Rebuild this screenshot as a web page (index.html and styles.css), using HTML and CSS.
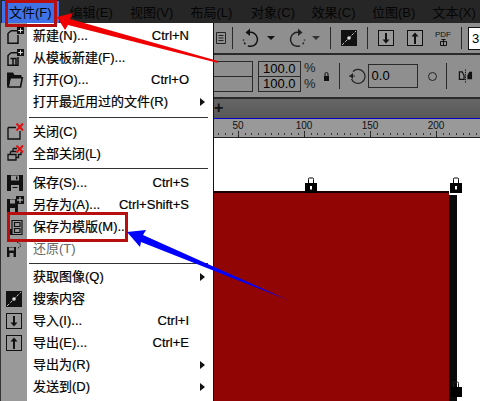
FILE: index.html
```html
<!DOCTYPE html>
<html lang="zh-CN">
<head>
  <meta charset="UTF-8">
  <title>文件菜单</title>
  <link rel="stylesheet" href="styles.css">
</head>
<body>

  <div class="menubar">
    <span class="menubar-item active">文件(F)</span>
    <span class="menubar-item">编辑(E)</span>
    <span class="menubar-item">视图(V)</span>
    <span class="menubar-item">布局(L)</span>
    <span class="menubar-item">对象(C)</span>
    <span class="menubar-item">效果(C)</span>
    <span class="menubar-item">位图(B)</span>
    <span class="menubar-item">文本(X)</span>
  </div>

  <div class="main">
    <div class="sidebar">
      <div class="tool">
        <svg width="18" height="18" viewBox="0 0 18 18" fill="none" stroke="#111" stroke-width="1.5"><path d="M5 3.7h6M5 3.7L2 6.5V16.3h10V8"/><rect x="11" y="0" width="7" height="7" fill="#111" stroke="none"/><path d="M14.5 1.2v4.6M12.2 3.5h4.6" stroke="#ddd" stroke-width="1"/></svg>
      </div>
      <div class="tool">
        <svg width="18" height="18" viewBox="0 0 18 18" fill="none" stroke="#111" stroke-width="1.5"><path d="M5 3.7h6M5 3.7L2 6.5V16.3h10V8M4.5 9.5h5.5v6.8M7 9.5v6.8"/><rect x="11" y="0" width="7" height="7" fill="#111" stroke="none"/><path d="M14.5 1.2v4.6M12.2 3.5h4.6" stroke="#ddd" stroke-width="1"/></svg>
      </div>
      <div class="tool">
        <svg width="18" height="18" viewBox="0 0 18 18"><path d="M1 1.5h6l1.5 2.5h7v2H5L3 15H1z" fill="#111"/><path d="M4 6.7h12.3L14.5 16H2z" fill="none" stroke="#111" stroke-width="1.6"/></svg>
      </div>
      <div class="tool"></div>
      <div class="tool-gap"></div>
      <div class="tool">
        <svg width="18" height="18" viewBox="0 0 18 18" fill="none" stroke="#111" stroke-width="1.4"><path d="M2 4.5h8M2 4.5V16h12V8"/><path d="M10.5 0.5l6.5 7M17 0.5l-6.5 7" stroke="#e01010" stroke-width="2"/></svg>
      </div>
      <div class="tool">
        <svg width="18" height="18" viewBox="0 0 18 18" fill="none" stroke="#111" stroke-width="1.3"><path d="M7 3.5h4M7 3.5v3M4.5 6.5h6M4.5 6.5v3M2 9.5h8V15H2zM10 12.5h2.5V9.5h2.5V7"/><path d="M10.5 0.5l6.5 7M17 0.5l-6.5 7" stroke="#e01010" stroke-width="2"/></svg>
      </div>
      <div class="tool-gap short"></div>
      <div class="tool">
        <svg width="18" height="18" viewBox="0 0 18 18"><path d="M1 1h16v16H1z" fill="#111"/><rect x="5" y="1.5" width="8" height="5" fill="#999"/><rect x="10" y="2.5" width="1.5" height="3" fill="#111"/><rect x="5" y="11" width="8" height="6" fill="#999"/><rect x="6.5" y="13" width="5" height="1" fill="#111"/></svg>
      </div>
      <div class="tool">
        <svg width="18" height="18" viewBox="0 0 18 18"><path d="M1 3h11v14H1z" fill="#111"/><rect x="4" y="3.5" width="5" height="4" fill="#999"/><rect x="4" y="12" width="5" height="5" fill="#999"/><rect x="10" y="0" width="8" height="8" fill="#111"/><path d="M14 1v6M11 4h6" stroke="#ddd"/></svg>
      </div>
      <div class="tool">
        <svg width="18" height="18" viewBox="0 0 18 18" fill="none" stroke="#111" stroke-width="1.2"><path d="M6 2.5h10v14H6z"/><path d="M8.5 4.5h5.5v4H8.5zM8.5 10.5h5.5v4H8.5z"/><rect x="1" y="11" width="5" height="6" fill="#111" stroke="none"/></svg>
      </div>
      <div class="tool">
        <svg width="18" height="18" viewBox="0 0 18 18"><path d="M1 7h9v10H1z" fill="#111"/><rect x="3" y="7.5" width="5" height="3" fill="#999"/><rect x="3.5" y="13" width="4" height="4" fill="#999"/><path d="M11 2.5a3 3 0 0 1 3 4.5l-2 1" fill="none" stroke="#111" stroke-dasharray="1.5 1"/></svg>
      </div>
      <div class="tool-gap tiny"></div>
      <div class="tool"></div>
      <div class="tool">
        <svg width="16" height="16" viewBox="0 0 16 16"><rect width="16" height="16" fill="#111"/><path d="M1 15L15 1" stroke="#bbb" stroke-dasharray="3 1.5"/><circle cx="8" cy="8" r="1.8" fill="#ddd"/></svg>
      </div>
      <div class="tool">
        <svg class="box-icon" width="16" height="16" viewBox="0 0 16 16"><path d="M8 3v8" stroke="#111" stroke-width="2"/><path d="M4.5 9.5h7L8 13.5z" fill="#111"/></svg>
      </div>
      <div class="tool">
        <svg class="box-icon" width="16" height="16" viewBox="0 0 16 16"><path d="M8 6v8" stroke="#111" stroke-width="2"/><path d="M4.5 6.5h7L8 2.5z" fill="#111"/></svg>
      </div>
    </div>

    <div class="content">
      <div class="toolbar">
        <svg class="list-icon" width="12" height="12" viewBox="0 0 12 12" fill="none" stroke="#222"><path d="M1.5 .5h9v11h-9zM3.500 3.500h5M3.500 6h5M3.500 8.500h5"/></svg>
        <i class="vsep"></i>
        <svg class="undo" width="18" height="20" viewBox="0 0 18 20" fill="none" stroke="#111" stroke-width="1.5"><path d="M7 4.500a7 7 0 1 1-5.500 7" stroke-dasharray="26 3 2 2"/><path d="M8 0.500L3.500 4.500 8 8z" fill="#111" stroke="none"/></svg>
        <i class="caret dark"></i>
        <svg class="redo" width="18" height="20" viewBox="0 0 18 20" fill="none" stroke="#222" stroke-width="1.5"><path d="M11 4.500a7 7 0 1 0 5.500 7" stroke-dasharray="26 3 2 2"/><path d="M10 0.500L14.500 4.500 10 8z" fill="#222" stroke="none"/></svg>
        <i class="caret"></i>
        <i class="vsep wide"></i>
        <svg width="16" height="16" viewBox="0 0 16 16"><rect width="16" height="16" fill="#111"/><path d="M1 15L15 1" stroke="#bbb" stroke-dasharray="3 1.5"/><circle cx="8" cy="8" r="1.8" fill="#ddd"/></svg>
        <i class="vsep wide"></i>
        <svg class="box-icon" width="16" height="16" viewBox="0 0 16 16"><path d="M8 3v8" stroke="#111" stroke-width="2"/><path d="M4.5 9.5h7L8 13.5z" fill="#111"/></svg>
        <svg class="box-icon up" width="16" height="16" viewBox="0 0 16 16"><path d="M8 6v8" stroke="#111" stroke-width="2"/><path d="M4.5 6.5h7L8 2.5z" fill="#111"/></svg>
        <span class="pdf">PDF<svg width="7" height="7" viewBox="0 0 7 7" fill="none" stroke="#111"><path d="M.5 2.5h6v4h-6zM3.500 .5v6M1.500 .5h4"/></svg></span>
        <i class="vsep"></i>
        <span class="zoom-box">3</span>
      </div>

      <div class="propbar">
        <div class="cell-pair first"><span></span><span></span></div>
        <div class="cell-pair"><span>100.0</span><span>100.0</span></div>
        <div class="percent"><span>%</span><span>%</span></div>
        <svg class="small-lock" width="7" height="9" viewBox="0 0 7 9"><path d="M1 4h5v5H1z" fill="#111"/><path d="M2 4V2a1.5 1.5 0 0 1 3 0v2" fill="none" stroke="#111"/></svg>
        <i class="vsep tall"></i>
        <svg class="rotate" width="17" height="17" viewBox="0 0 17 17" fill="none" stroke="#222" stroke-width="1.2"><path d="M4 3.500a7 7 0 1 1-1.500 7.500M0 8h6"/><path d="M4 5L0.500 8 4 11z" fill="#222" stroke="none"/></svg>
        <span class="angle">0.0</span>
        <i class="ring"></i>
        <i class="vsep tall"></i>
        <svg class="mirror" width="15" height="14" viewBox="0 0 16 14"><path d="M1.5 2.500h3l2 4v4h-5z" fill="none" stroke="#111" stroke-width="1.3"/><path d="M10 6.500l2-4h3v8h-5z" fill="#111"/><path d="M8 0v14" stroke="#111" stroke-dasharray="1.5 1"/></svg>
      </div>

      <div class="tabbar"><span class="tab-plus">+</span></div>

      <div class="ruler">
        <span class="ruler-num n50">50</span>
        <span class="ruler-num n100">100</span>
        <span class="ruler-num n150">150</span>
        <span class="ruler-num n200">200</span>
      </div>

      <div class="canvas">
        <div class="page"></div>
        <svg class="lock lock-top" width="12" height="16" viewBox="0 0 12 16"><use href="#lock-shape"/></svg>
        <svg class="lock lock-corner" width="12" height="16" viewBox="0 0 12 16"><use href="#lock-shape"/></svg>
        <svg class="lock lock-bottom" width="12" height="16" viewBox="0 0 12 16"><path d="M3.500 6V2.500a1 1 0 0 1 1-1.500h3a1 1 0 0 1 1 1.500V6" fill="none" stroke="#222"/><rect x="0" y="6" width="12" height="10" fill="#000"/></svg>
      </div>
    </div>
  </div>

  <svg class="defs" width="0" height="0">
    <symbol id="lock-shape" viewBox="0 0 12 16">
      <path d="M3.500 6V2.500a1 1 0 0 1 1-1.500h3a1 1 0 0 1 1 1.500V6" fill="#fff" stroke="#000"/>
      <rect x="0" y="6" width="12" height="10" fill="#000"/>
      <rect x="5" y="9" width="2" height="3.500" fill="#fff"/>
    </symbol>
  </svg>

  <div class="menu">
    <div class="row"><span>新建(N)...</span><span>Ctrl+N</span></div>
    <div class="row"><span>从模板新建(F)...</span></div>
    <div class="row"><span>打开(O)...</span><span>Ctrl+O</span></div>
    <div class="row"><span>打开最近用过的文件(R)</span><i class="more"></i></div>
    <hr class="sep">
    <div class="row"><span>关闭(C)</span></div>
    <div class="row"><span>全部关闭(L)</span></div>
    <hr class="sep short">
    <div class="row"><span>保存(S)...</span><span>Ctrl+S</span></div>
    <div class="row"><span>另存为(A)...</span><span>Ctrl+Shift+S</span></div>
    <div class="row"><span>保存为模版(M)...</span></div>
    <div class="row disabled"><span>还原(T)</span></div>
    <hr class="sep tiny">
    <div class="row"><span>获取图像(Q)</span><i class="more"></i></div>
    <div class="row"><span>搜索内容</span></div>
    <div class="row"><span>导入(I)...</span><span>Ctrl+I</span></div>
    <div class="row"><span>导出(E)...</span><span>Ctrl+E</span></div>
    <div class="row"><span>导出为(R)</span><i class="more"></i></div>
    <div class="row"><span>发送到(D)</span><i class="more"></i></div>
  </div>

  <!-- red/blue annotations drawn over the screenshot -->
  <div class="mark mark-file"></div>
  <div class="mark mark-save"></div>
  <svg class="arrows" width="480" height="401" viewBox="0 0 480 401">
    <path d="M57 17L73 13 70 19 218 61V63L68 25 65 30z" fill="#f00000"/>
    <path d="M127 232L146 230 143 235 288 300 141 242 140 247z" fill="#0000ff"/>
  </svg>

</body>
</html>
```

FILE: styles.css
```css
* {
  box-sizing: border-box;
}

html, body {
  height: 100%;
}

body {
  margin: 0;
  overflow: hidden;
  position: relative;
  background: #fff;
  color: #000;
  font-family: "Liberation Sans", "Noto Sans CJK SC", sans-serif;
  font-size: 13px;
  display: flex;
  flex-direction: column;
}

i {
  display: block;
}

/* Top menu */
.menubar {
  height: 23px;
  flex: none;
  display: flex;
  align-items: center;
  gap: 19.5px;
  padding-left: 8px;
  background: #262626;
  border-left: 1px solid #333;
}

.menubar-item {
  position: relative;
  z-index: 0;
  width: 41px;
  white-space: nowrap;
  font-size: 13px;
  color: #050505;
}

.menubar-item.active::before {
  content: "";
  position: absolute;
  z-index: -1;
  left: -7px;
  right: -9px;
  top: -1px;
  bottom: -2px;
  background: #3f72e6;
}

.main {
  flex: 1;
  display: flex;
  min-height: 0;
}

/* Left tool column */
.sidebar {
  width: 27px;
  flex: none;
  padding-top: 2px;
  background: #999;
  border-left: 1px solid #333;
}

.tool {
  height: 22px;
  display: flex;
  align-items: center;
  padding-left: 5px;
}

.tool-gap {
  height: 8px;
}

.tool-gap.short {
  height: 7px;
}

.tool-gap.tiny {
  height: 6px;
}

.box-icon {
  background: #999;
  outline: 1px solid #111;
  outline-offset: -1px;
}

.content {
  flex: 1;
  min-width: 0;
  display: flex;
  flex-direction: column;
}

/* First toolbar */
.toolbar {
  height: 32px;
  flex: none;
  display: flex;
  align-items: center;
  padding-left: 188px;
  background: #8f8f8f;
  border-bottom: 2px solid #2a2a2a;
}

.toolbar svg {
  flex: none;
}

.list-icon {
  margin-right: 5px;
}

.vsep {
  flex: none;
  width: 1px;
  height: 22px;
  background: #2a2a2a;
}

.vsep.wide {
  margin: 0 10px;
}

.vsep.tall {
  height: 26px;
}

.undo {
  margin-left: 9px;
}

.redo {
  margin-left: 13px;
}

.caret {
  flex: none;
  width: 0;
  height: 0;
  margin-left: 6px;
  border-left: 4px solid transparent;
  border-right: 4px solid transparent;
  border-top: 4px solid #333;
}

.caret.dark {
  margin-left: 7px;
  border-top-color: #111;
}

.box-icon.up {
  margin-left: 13px;
}

.pdf {
  display: flex;
  flex-direction: column;
  align-items: center;
  width: 17px;
  margin: 0 10px 0 12px;
  font-size: 8px;
  line-height: 9px;
  color: #111;
}

.zoom-box {
  flex: none;
  margin-left: 6px;
  width: 20px;
  height: 23px;
  padding-left: 3px;
  line-height: 21px;
  font-size: 13px;
  background: #fff;
  border: 1px solid #111;
}

/* Property bar */
.propbar {
  height: 44px;
  flex: none;
  display: flex;
  align-items: center;
  padding-left: 186px;
  background: #8f8f8f;
  border-bottom: 2px solid #2a2a2a;
}

.cell-pair {
  width: 43px;
  height: 31px;
  display: flex;
  flex-direction: column;
  margin-left: 5px;
  border: 1px solid #2a2a2a;
}

.cell-pair.first {
  width: 40px;
  margin-left: 0;
  border-left: 0;
}

.cell-pair span {
  flex: 1;
  line-height: 14px;
  padding-left: 4px;
  font-size: 13px;
}

.cell-pair span + span {
  border-top: 1px solid #2a2a2a;
}

.percent {
  display: flex;
  flex-direction: column;
  margin-left: 3px;
  font-size: 13px;
  line-height: 16px;
  color: #222;
}

.small-lock {
  flex: none;
  margin-left: 7px;
}

.propbar .vsep {
  margin-left: 9px;
}

.rotate {
  flex: none;
  margin-left: 9px;
}

.angle {
  flex: none;
  width: 50px;
  height: 24px;
  margin-left: 2px;
  padding-left: 3px;
  line-height: 22px;
  border: 1px solid #2a2a2a;
}

.ring {
  flex: none;
  width: 9px;
  height: 9px;
  margin-left: 10px;
  border: 1.5px solid #222;
  border-radius: 50%;
}

.mirror {
  flex: none;
  margin-left: 11px;
}

/* Tabs and ruler */
.tabbar {
  height: 20px;
  flex: none;
  padding-left: 187px;
  line-height: 17px;
  font-size: 16px;
  background: linear-gradient(to bottom, #666, #585858);
  border-bottom: 1px solid #0000c8;
}

.tab-plus {
  font-weight: bold;
  color: #111;
}

.ruler {
  position: relative;
  height: 19px;
  flex: none;
  background-color: #999;
  background-image:
    linear-gradient(#222, #222),
    repeating-linear-gradient(to right, #333 0 1px, transparent 1px 6.6px),
    repeating-linear-gradient(to right, #222 0 1px, transparent 1px 66px);
  background-size: 100% 1px, 100% 2px, 100% 6px;
  background-position: 0 100%, 0 calc(100% - 3px), 13px calc(100% - 1px);
  background-repeat: no-repeat;
  font-size: 10px;
}

.ruler-num {
  position: absolute;
  top: 1px;
  line-height: 12px;
  transform: translateX(-50%);
  color: #111;
}

.n50 { left: 211px; }
.n100 { left: 277px; }
.n150 { left: 343px; }
.n200 { left: 409px; }

/* Canvas with the page */
.canvas {
  position: relative;
  flex: 1;
  min-height: 0;
  overflow: hidden;
  background: #fff;
}

.page {
  position: absolute;
  left: 40px;
  top: 53px;
  width: 382px;
  height: 300px;
  background: #920505;
  border-top: 2px solid #1c0000;
  box-shadow: 8px 4px 0 #0a0a0a;
}

.lock {
  position: absolute;
  display: block;
}

.lock-top { left: 278px; top: 39px; }
.lock-corner { left: 423px; top: 39px; }
.lock-bottom { left: 423px; top: 243px; }

.defs {
  position: absolute;
}

/* File dropdown */
.menu {
  position: absolute;
  left: 27px;
  top: 23px;
  width: 187px;
  height: 378px;
  overflow: hidden;
  padding-top: 2px;
  background: #fff;
  border-right: 1px solid #111;
  -webkit-text-stroke: 0.2px #000;
}

.row {
  height: 22px;
  display: flex;
  align-items: center;
  justify-content: space-between;
  padding: 0 24px 0 6px;
  position: relative;
  white-space: nowrap;
  line-height: 22px;
}

.row.disabled {
  color: #666;
  -webkit-text-stroke: 0;
}

.more {
  position: absolute;
  right: 8px;
  top: 7px;
  width: 0;
  height: 0;
  border-top: 4px solid transparent;
  border-bottom: 4px solid transparent;
  border-left: 5px solid #111;
}

.sep {
  height: 1px;
  margin: 4px 5px 3px 2px;
  border: 0;
  background: #333;
}

.sep.short {
  margin: 3px 5px 3px 2px;
}

.sep.tiny {
  margin: 3px 5px 2px 2px;
}

/* Annotations */
.mark {
  position: absolute;
  border: 3px solid #b70f0f;
}

.mark-file {
  left: 5px;
  top: 0;
  width: 52px;
  height: 27px;
}

.mark-save {
  left: 7px;
  top: 212px;
  width: 121px;
  height: 30px;
}

.arrows {
  position: absolute;
  left: 0;
  top: 0;
}
```
